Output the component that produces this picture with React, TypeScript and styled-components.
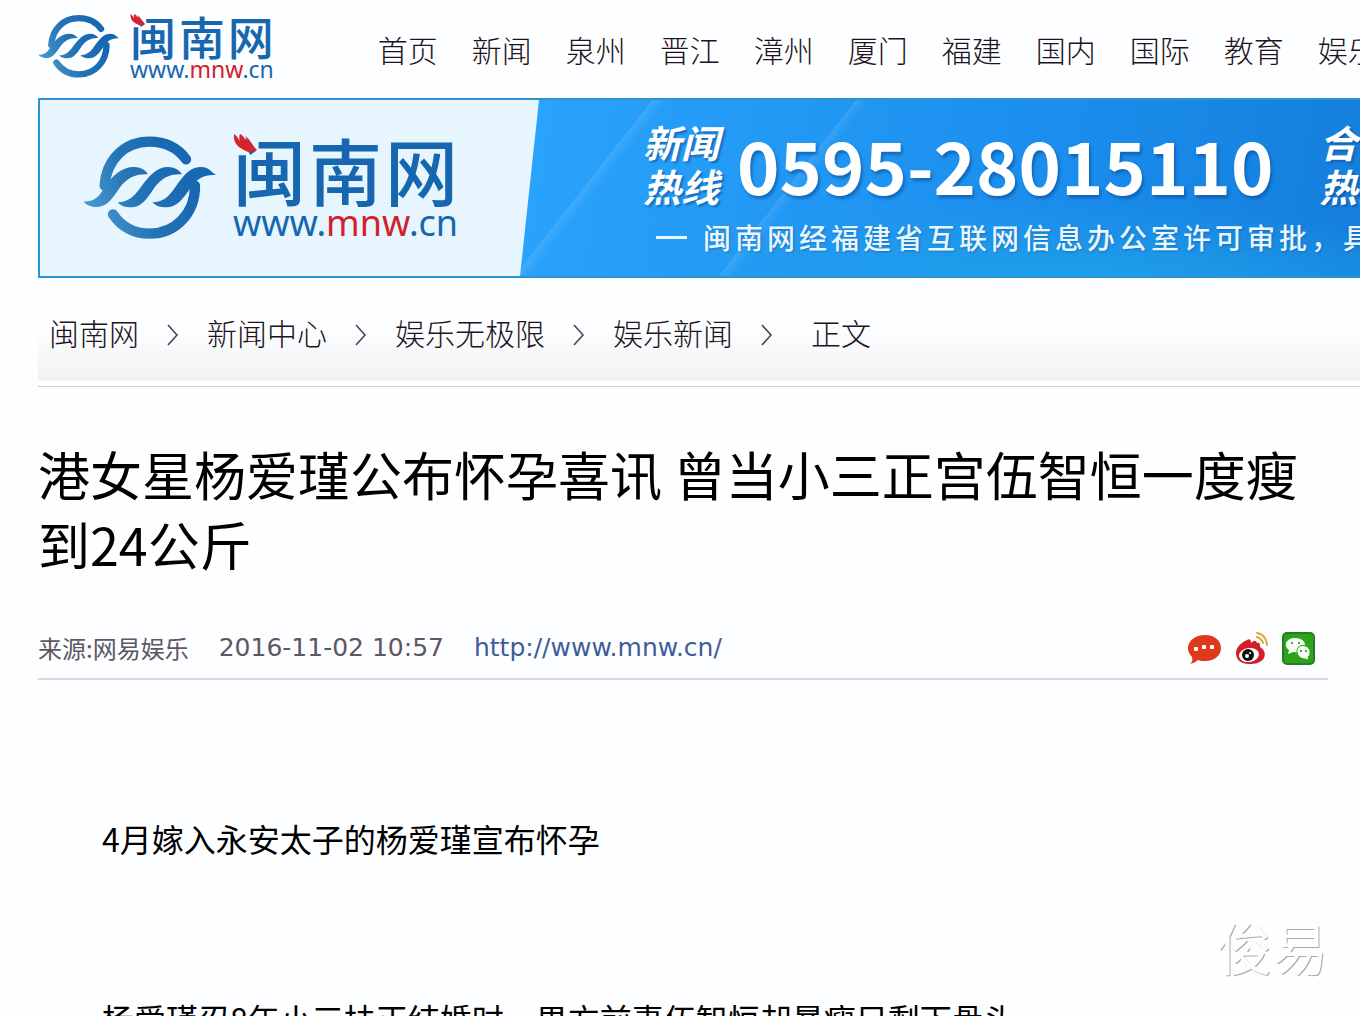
import React from "react";
import styled, { createGlobalStyle } from "styled-components";

const Global = createGlobalStyle`
  * { box-sizing: border-box; }
  body {
    margin: 0;
    background: #fdfeff;
    color: #000;
    font-family: "Noto Sans CJK SC", "Noto Sans", sans-serif;
  }
  a { color: inherit; text-decoration: none; }
  button { border: 0; padding: 0; background: none; cursor: pointer; }
`;

const Page = styled.div`
  position: relative;
  height: 100vh;
  overflow: hidden;
  padding-left: 38px;
`;

const Header = styled.header`
  display: flex;
  align-items: center;
  height: 98px;
  padding-bottom: 6px;
`;

const Nav = styled.nav`
  display: flex;
  gap: 34px;
  margin-left: 104px;
  padding-top: 6px;
  font-size: 30px;
  font-weight: 300;
  line-height: 40px;
  white-space: nowrap;
  color: #1c1420;
`;

const LogoLink = styled.a<{ $large?: boolean }>`
  display: flex;
  flex: none;
  align-items: center;
  gap: ${(p) => (p.$large ? 16 : 10)}px;
`;

const Mark = styled.svg<{ $large?: boolean }>`
  display: block;
  width: ${(p) => (p.$large ? 134 : 82)}px;
  height: ${(p) => (p.$large ? 106 : 65)}px;
`;

const Wordmark = styled.span<{ $large?: boolean }>`
  position: relative;
  display: flex;
  flex-direction: column;
  color: #1767b0;
  font-weight: 500;
`;

const SiteName = styled.span<{ $large?: boolean }>`
  display: flex;
  justify-content: space-between;
  font-size: ${(p) => (p.$large ? 73 : 46)}px;
  line-height: ${(p) => (p.$large ? 70 : 45)}px;
`;

const Domain = styled.span<{ $large?: boolean }>`
  font-family: "Noto Sans", sans-serif;
  font-weight: 400;
  font-size: ${(p) => (p.$large ? 36 : 23)}px;
  line-height: ${(p) => (p.$large ? 40 : 22)}px;
  em { font-style: normal; color: #d3202c; }
`;

const Feather = styled.svg<{ $large?: boolean }>`
  position: absolute;
  left: 0;
  top: 0;
  width: ${(p) => (p.$large ? 24 : 15)}px;
  height: ${(p) => (p.$large ? 20 : 13)}px;
`;

const Banner = styled.section`
  display: flex;
  height: 180px;
  overflow: hidden;
  border: 2px solid #2b93cf;
  border-right: 0;
  background:
    linear-gradient(128deg, transparent 42%, #ffffff1c 42%, transparent 43%, transparent 56%, #ffffff1c 56%, transparent 57%),
    radial-gradient(ellipse at 78% 110%, #1fa4e8 0, #1fa4e800 32%),
    linear-gradient(100deg, #2aa4fd 35%, #1b8eed 75%, #147edc);
`;

const BannerBrand = styled.div`
  display: flex;
  flex: none;
  align-items: center;
  width: 499px;
  padding-left: 43px;
  background: #e6f5fe;
  clip-path: polygon(0 0, 100% 0, 480px 100%, 0 100%);
`;

const BannerBody = styled.div`
  flex: none;
  padding: 19px 0 0 104px;
  color: #fff;
  white-space: nowrap;
`;

const Hotlines = styled.div`
  display: flex;
  align-items: center;
  height: 90px;
`;

const HotLabel = styled.span`
  width: 80px;
  font-size: 38px;
  font-style: italic;
  font-weight: 700;
  line-height: 44px;
  white-space: normal;
  text-shadow: 2px 2px 2px #0b4f9a99;
`;

const HotNumber = styled.strong`
  margin: 0 46px 0 14px;
  font-size: 72px;
  font-weight: 700;
  line-height: 90px;
  text-shadow: 2px 3px 3px #0b4f9a99;
`;

const License = styled.p`
  display: flex;
  align-items: center;
  gap: 16px;
  margin: 10px 0 0 13px;
  font-size: 28px;
  font-weight: 500;
  line-height: 36px;
  letter-spacing: 4px;
  color: #e9f6ff;
  text-shadow: 1px 1px 2px #0b4f9a80;
  &::before { content: ""; width: 31px; height: 3px; background: #e9f6ff; }
`;

const Breadcrumb = styled.nav`
  display: flex;
  align-items: center;
  height: 109px;
  padding-left: 11px;
  border-bottom: 1px solid #c9cdd2;
  background: linear-gradient(#fdfeff 45%, #f1f2f4 94%, #fdfeff 96%);
  font-size: 30px;
  font-weight: 300;
  line-height: 40px;
  white-space: nowrap;
  color: #1c1420;
`;

const Chevron = styled.svg`
  flex: none;
  width: 12px;
  height: 22px;
  margin: 6px 28px 0;
`;

const Current = styled.span`
  margin-left: 10px;
`;

const Article = styled.article`
  margin-right: 32px;
`;

const Title = styled.h1`
  margin: 52px 0 0;
  font-size: 52px;
  font-weight: 400;
  line-height: 70px;
`;

const Meta = styled.div`
  display: flex;
  align-items: center;
  gap: 30px;
  height: 62px;
  margin-top: 39px;
  border-bottom: 2px solid #d6dade;
  font-size: 24px;
  line-height: 32px;
  color: #5c5762;
`;

const Latin = styled.time`
  font-family: "DejaVu Sans", sans-serif;
  font-size: 25px;
`;

const SourceLink = styled.a`
  font-family: "DejaVu Sans", sans-serif;
  font-size: 25px;
  color: #3f5c98;
`;

const Share = styled.div`
  display: flex;
  gap: 12px;
  margin-left: auto;
  padding-right: 12px;
`;

const ShareButton = styled.button`
  width: 35px;
  height: 35px;
  svg { display: block; width: 35px; height: 35px; }
`;

const Body = styled.div`
  display: flex;
  flex-direction: column;
  gap: 132px;
  padding-top: 134px;
`;

const Paragraph = styled.p`
  margin: 0;
  font-size: 32px;
  line-height: 48px;
  text-indent: 2em;
`;

const Watermark = styled.span`
  position: absolute;
  right: 32px;
  bottom: 30px;
  color: #fdfeff;
  font-size: 56px;
  font-weight: 400;
  line-height: 80px;
  text-shadow: 1px 1px 0 #a9a9ad;
`;

function Logo({ large }: { large?: boolean }) {
  const id = large ? "markLarge" : "markSmall";
  const paint = `url(#${id})`;
  return (
    <LogoLink href="#" $large={large} aria-label="闽南网">
      <Mark $large={large} viewBox="158 120 402 318" aria-hidden="true">
        <defs>
          <linearGradient id={id} gradientUnits="userSpaceOnUse" x1="160" y1="330" x2="450" y2="200">
            <stop offset="0" stopColor="#4b9bd2" />
            <stop offset="0.5" stopColor="#2473b5" />
            <stop offset="1" stopColor="#1768b2" />
          </linearGradient>
        </defs>
        <g fill="none" stroke={paint} strokeWidth="31" strokeLinecap="round">
          <path d="M223 272C228 192 285 140 357 140C406 140 444 161 467 193" />
          <path d="M248 358C274 396 313 416 358 416C435 416 494 356 494 272" />
        </g>
        <g fill={paint}>
          <path d="M160 320C194 320 206 304 219 283C245 240 276 216 311 216C331 216 345 225 353 238C313 236 290 250 269 277C244 314 229 336 200 336C182 336 170 331 160 320Z" />
          <path d="M262 322C293 321 310 305 328 281C358 240 380 216 413 216C433 216 446 225 455 238C417 236 394 250 373 277C348 315 332 337 303 337C284 337 271 333 262 322Z" />
          <path d="M366 322C398 321 414 306 433 279C463 236 481 216 513 216C537 216 545 235 558 239C530 240 510 243 488 268C458 313 440 337 408 337C390 337 376 333 366 322Z" />
        </g>
      </Mark>
      <Wordmark>
        <SiteName $large={large}>
          <span>闽</span>
          <span>南</span>
          <span>网</span>
        </SiteName>
        <Domain $large={large}>
          www.<em>mnw</em>.cn
        </Domain>
        <Feather $large={large} viewBox="0 0 24 20" aria-hidden="true">
          <path d="M1 1C4 3 5 5 7 9C6 6 6 3 7 1C11 3 12 6 14 10C14 7 13 5 12 3C17 6 19 12 24 17C20 19 15 20 11 17C4 14 0 9 1 1Z" fill="#d8222c" />
        </Feather>
      </Wordmark>
    </LogoLink>
  );
}

function Separator() {
  return (
    <Chevron viewBox="0 0 12 22" aria-hidden="true">
      <path d="M1 1L10 11L1 21" fill="none" stroke="#4a4550" strokeWidth="1.6" />
    </Chevron>
  );
}

const channels = ["首页", "新闻", "泉州", "晋江", "漳州", "厦门", "福建", "国内", "国际", "教育", "娱乐"];
const trail = ["闽南网", "新闻中心", "娱乐无极限", "娱乐新闻"];

export default function App() {
  return (
    <Page>
      <Global />
      <Header>
        <Logo />
        <Nav>
          {channels.map((name) => (
            <a href="#" key={name}>{name}</a>
          ))}
        </Nav>
      </Header>
      <Banner>
        <BannerBrand>
          <Logo large />
        </BannerBrand>
        <BannerBody>
          <Hotlines>
            <HotLabel>新闻热线</HotLabel>
            <HotNumber>0595-28015110</HotNumber>
            <HotLabel>合作热线</HotLabel>
          </Hotlines>
          <License>闽南网经福建省互联网信息办公室许可审批，具</License>
        </BannerBody>
      </Banner>
      <Breadcrumb>
        {trail.map((name) => (
          <React.Fragment key={name}>
            <a href="#">{name}</a>
            <Separator />
          </React.Fragment>
        ))}
        <Current>正文</Current>
      </Breadcrumb>
      <Article>
        <Title>港女星杨爱瑾公布怀孕喜讯 曾当小三正宫伍智恒一度瘦到24公斤</Title>
        <Meta>
          <span>来源:网易娱乐</span>
          <Latin>2016-11-02 10:57</Latin>
          <SourceLink href="#">http://www.mnw.cn/</SourceLink>
          <Share>
            <ShareButton aria-label="评论">
              <svg viewBox="0 0 35 35">
                <path d="M18 4C28 4 34 10 34 17C34 24 28 30 18 30C15 30 13 30 11 29C9 31 6 32 3 33C5 31 6 29 5 26C2 23 1 20 1 17C1 10 8 4 18 4Z" fill="#dd3a1c" />
                <g fill="#fff">
                  <rect x="7" y="16" width="4" height="4" rx="1" />
                  <rect x="15" y="14" width="4" height="4" rx="1" />
                  <rect x="23" y="14" width="4" height="4" rx="1" />
                </g>
              </svg>
            </ShareButton>
            <ShareButton aria-label="微博">
              <svg viewBox="0 0 35 35">
                <path d="M13 9C16 7 17 9 17 12C20 9 22 9 23 12C26 11 26 13 26 16C30 18 32 23 30 27C27 32 21 33 15 33C7 33 2 29 2 22C2 16 8 11 13 9Z" fill="#d2202b" />
                <ellipse cx="15" cy="24" rx="10" ry="7" fill="#fff" transform="rotate(-8 15 24)" />
                <circle cx="14" cy="24" r="6" fill="#111" />
                <circle cx="13" cy="25" r="2" fill="#fff" />
                <circle cx="16" cy="22" r="1" fill="#fff" />
                <g fill="none" stroke="#e2a43e" strokeWidth="2" strokeLinecap="round">
                  <path d="M23 2C29 3 33 8 33 14" />
                  <path d="M23 6C26 7 28 9 29 12" />
                </g>
              </svg>
            </ShareButton>
            <ShareButton aria-label="微信">
              <svg viewBox="0 0 35 35">
                <rect x="2" y="2" width="31" height="31" rx="4" fill="#2da31c" stroke="#277c25" strokeWidth="2" />
                <path d="M14 7C20 7 24 10 24 14C19 14 17 18 18 21C15 22 13 21 12 21L7 23L8 19C2 15 5 7 14 7Z" fill="#f5fff2" />
                <path d="M19 15C24 13 30 17 29 22C29 24 28 25 27 26L28 29L24 28C19 28 16 24 16 20C16 18 17 16 19 15Z" fill="#f5fff2" stroke="#2da31c" />
                <g fill="#277c25">
                  <circle cx="11" cy="12" r="1" />
                  <circle cx="18" cy="12" r="1" />
                  <circle cx="20" cy="20" r="1" />
                  <circle cx="25" cy="20" r="1" />
                </g>
              </svg>
            </ShareButton>
          </Share>
        </Meta>
        <Body>
          <Paragraph>4月嫁入永安太子的杨爱瑾宣布怀孕</Paragraph>
          <Paragraph>杨爱瑾忍8年小三扶正结婚时，男方前妻伍智恒却暴瘦只剩下骨头</Paragraph>
        </Body>
      </Article>
      <Watermark>俊易</Watermark>
    </Page>
  );
}
